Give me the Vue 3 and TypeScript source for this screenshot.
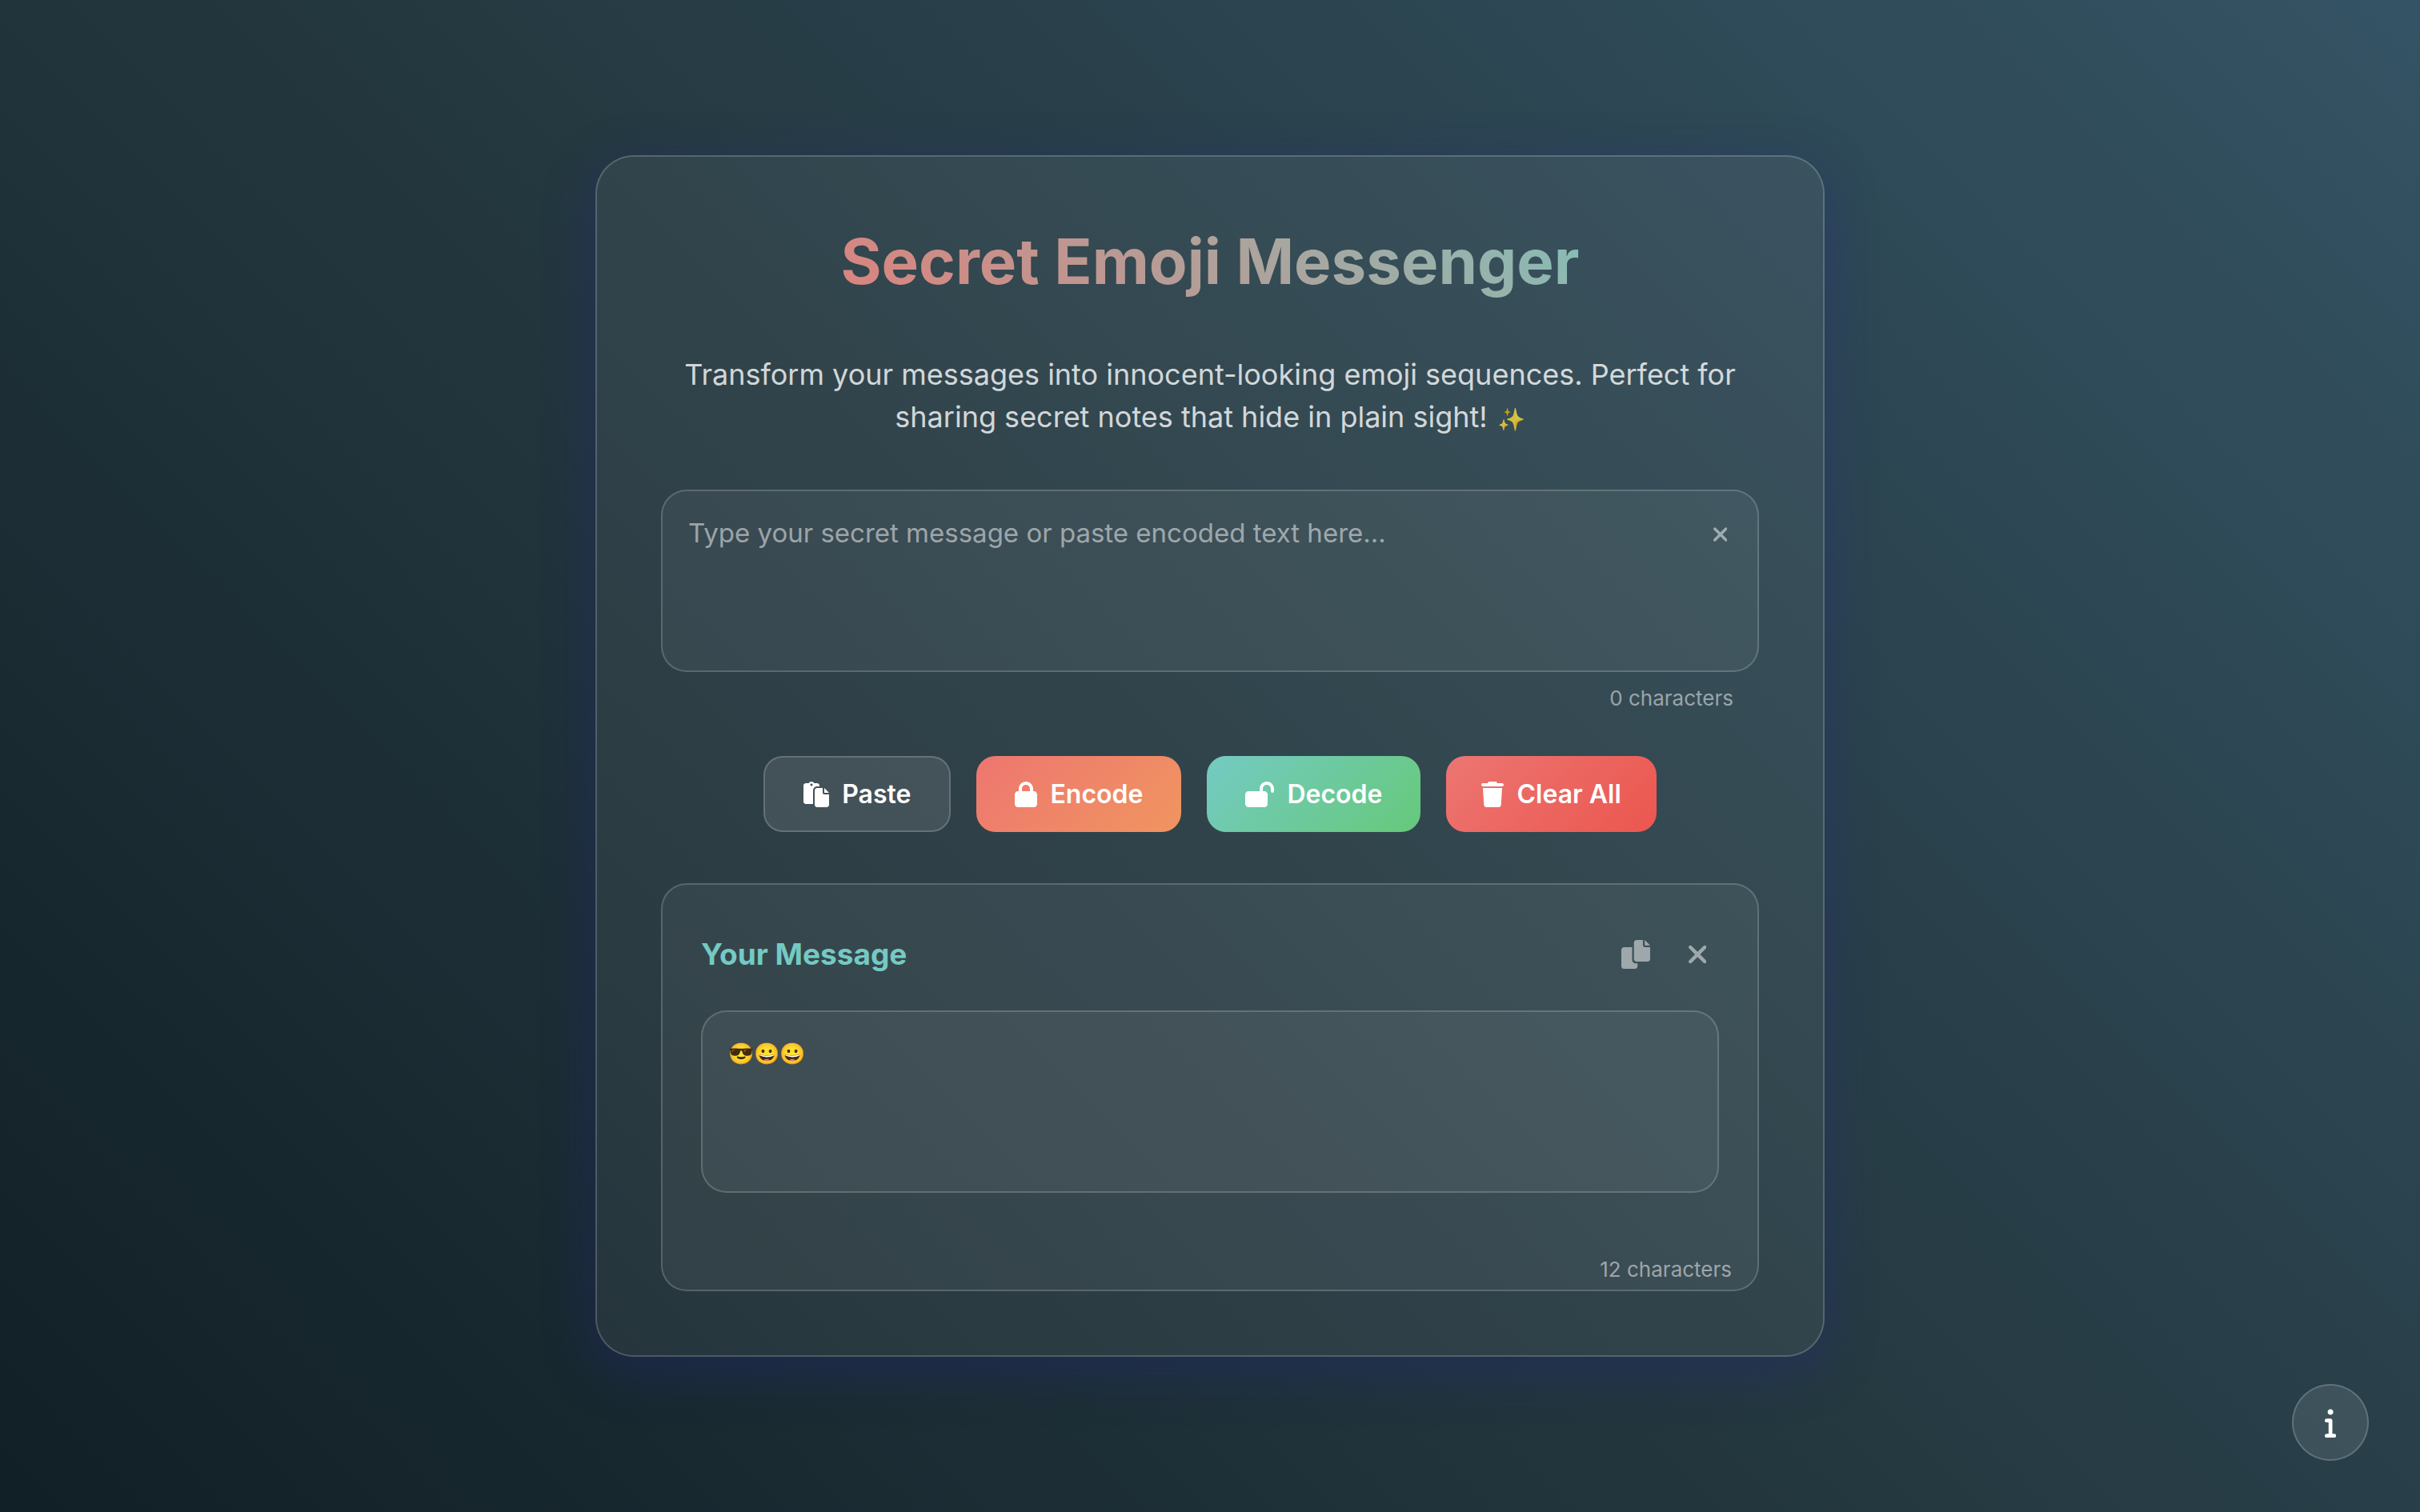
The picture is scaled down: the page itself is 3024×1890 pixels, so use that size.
<script setup lang="ts">
import { computed, ref } from 'vue'

const message = ref('')
const output = ref('😎😀😀')
const outputCount = ref(12)
const messageCount = computed(() => message.value.length)

const xmark =
  'M310.6 361.4c12.5 12.5 12.5 32.75 0 45.25C304.4 412.9 296.2 416 288 416s-16.38-3.125-22.62-9.375L160 301.3L54.63 406.6C48.38 412.9 40.19 416 32 416S15.63 412.9 9.375 406.6c-12.5-12.5-12.5-32.75 0-45.25l105.4-105.4L9.375 150.6c-12.5-12.5-12.5-32.75 0-45.25s32.75-12.5 45.25 0L160 210.8l105.4-105.4c12.5-12.5 32.75-12.5 45.25 0s12.5 32.75 0 45.25l-105.4 105.4L310.6 361.4z'

interface Action {
  label: string
  kind: string
  width: number
  path: string
}

const actions: Action[] = [
  {
    label: 'Paste',
    kind: 'paste',
    width: 512,
    path: 'M320 96V80C320 53.49 298.5 32 272 32H215.4C204.3 12.89 183.6 0 160 0S115.7 12.89 104.6 32H48C21.49 32 0 53.49 0 80v320C0 426.5 21.49 448 48 448l144 .0013L192 176C192 131.8 227.8 96 272 96H320zM160 88C146.8 88 136 77.25 136 64S146.8 40 160 40S184 50.75 184 64S173.3 88 160 88zM416 128v96h96L416 128zM384 224L384 128h-112C245.5 128 224 149.5 224 176v288c0 26.51 21.49 48 48 48h192c26.51 0 48-21.49 48-48V256h-96C398.3 256 384 241.7 384 224z',
  },
  {
    label: 'Encode',
    kind: 'encode',
    width: 448,
    path: 'M144 144v48H304V144c0-44.2-35.8-80-80-80s-80 35.8-80 80zM80 192V144C80 64.5 144.5 0 224 0s144 64.5 144 144v48h16c35.3 0 64 28.7 64 64V448c0 35.3-28.7 64-64 64H64c-35.3 0-64-28.7-64-64V256c0-35.3 28.7-64 64-64H80z',
  },
  {
    label: 'Decode',
    kind: 'decode',
    width: 576,
    path: 'M352 144c0-44.2 35.8-80 80-80s80 35.8 80 80v48c0 17.7 14.3 32 32 32s32-14.3 32-32V144C576 64.5 511.5 0 432 0S288 64.5 288 144v48H64c-35.3 0-64 28.7-64 64V448c0 35.3 28.7 64 64 64H384c35.3 0 64-28.7 64-64V256c0-35.3-28.7-64-64-64H352V144z',
  },
  {
    label: 'Clear All',
    kind: 'clear-all',
    width: 448,
    path: 'M135.2 17.7L128 32H32C14.3 32 0 46.3 0 64S14.3 96 32 96H416c17.7 0 32-14.3 32-32s-14.3-32-32-32H320l-7.2-14.3C307.4 6.8 296.3 0 284.2 0H163.8c-12.1 0-23.2 6.8-28.6 17.7zM416 128H32L53.2 467c1.6 25.3 22.6 45 47.9 45H346.9c25.3 0 46.3-19.7 47.9-45L416 128z',
  },
]
</script>

<template>
  <main class="page">
    <section class="card">
      <h1>Secret Emoji Messenger</h1>
      <p class="intro">
        Transform your messages into innocent-looking emoji sequences. Perfect for sharing secret notes that hide in
        plain sight!<span class="sparkles">✨</span>
      </p>

      <div class="field">
        <textarea
          v-model="message"
          class="box"
          aria-label="Secret message"
          placeholder="Type your secret message or paste encoded text here..."
        ></textarea>
        <button type="button" class="icon-button field-clear" aria-label="Clear message" @click="message = ''">
          <svg height="28" viewBox="0 0 320 512"><path :d="xmark" /></svg>
        </button>
      </div>
      <p class="count">{{ messageCount }} characters</p>

      <div class="actions">
        <button v-for="action in actions" :key="action.label" type="button" class="action" :class="action.kind">
          <svg height="32" :viewBox="`0 0 ${action.width} 512`"><path :d="action.path" /></svg>
          <span>{{ action.label }}</span>
        </button>
      </div>

      <section class="panel">
        <header class="panel-head">
          <h2>Your Message</h2>
          <div class="panel-tools">
            <button type="button" class="icon-button" aria-label="Copy">
              <svg height="36" viewBox="0 0 512 512">
                <path
                  d="M384 96L384 0h-112c-26.51 0-48 21.49-48 48v288c0 26.51 21.49 48 48 48H464c26.51 0 48-21.49 48-48V128h-95.1C398.4 128 384 113.6 384 96zM416 0v96h96L416 0zM192 352V128h-144c-26.51 0-48 21.49-48 48v288c0 26.51 21.49 48 48 48h192c26.51 0 48-21.49 48-48L288 416h-32C220.7 416 192 387.3 192 352z"
                />
              </svg>
            </button>
            <button type="button" class="icon-button" aria-label="Close">
              <svg height="36" viewBox="0 0 320 512"><path :d="xmark" /></svg>
            </button>
          </div>
        </header>
        <div class="panel-body">
          <textarea v-model="output" class="box emoji" aria-label="Your message" readonly></textarea>
        </div>
        <p class="count">{{ outputCount }} characters</p>
      </section>
    </section>

    <button type="button" class="info" aria-label="Information">
      <svg height="38" viewBox="0 0 192 512">
        <path
          d="M160 448h-32V224c0-17.69-14.33-32-32-32L32 192c-17.67 0-32 14.31-32 32s14.33 32 32 32h32v192H32c-17.67 0-32 14.31-32 32s14.33 32 32 32h128c17.67 0 32-14.31 32-32S177.7 448 160 448zM96 128c26.51 0 48-21.49 48-48S122.5 32 96 32S48 53.49 48 80S69.49 128 96 128z"
        />
      </svg>
    </button>
  </main>
</template>

<style>
body {
  margin: 0;
}
</style>

<style scoped>
.page {
  min-height: 100vh;
  box-sizing: border-box;
  padding: 64px;
  display: flex;
  align-items: center;
  justify-content: center;
  background: linear-gradient(45deg, #111f26, #253941, #345364);
  font-family: Inter, 'Noto Sans', sans-serif;
  color: #fff;
}

.card {
  width: 100%;
  max-width: 1536px;
  box-sizing: border-box;
  padding: 80px;
  border: 2px solid rgba(255, 255, 255, 0.18);
  border-radius: 48px;
  background: rgba(255, 255, 255, 0.06);
  box-shadow: 0 16px 64px rgba(36, 39, 131, 0.37);
}

h1,
h2,
p {
  margin: 0;
}

h1 {
  font-size: 78px;
  line-height: 102px;
  font-weight: 700;
  text-align: center;
  background: linear-gradient(45deg, #ee7670, #74cac3);
  background-clip: text;
  color: transparent;
}

.intro {
  margin: 64px 0;
  font-size: 36px;
  line-height: 53px;
  text-align: center;
  color: rgba(255, 255, 255, 0.8);
}

.sparkles {
  display: inline-block;
  margin-left: 12px;
  font-size: 28px;
  line-height: 32px;
  vertical-align: middle;
}

.field {
  position: relative;
}

.box {
  display: block;
  width: 100%;
  height: 228px;
  box-sizing: border-box;
  padding: 32px;
  border: 2px solid rgba(255, 255, 255, 0.18);
  border-radius: 32px;
  background: rgba(255, 255, 255, 0.05);
  color: #fff;
  font-family: inherit;
  font-size: 33px;
  line-height: 40px;
  resize: none;
  outline: none;
}

.box::placeholder {
  color: rgba(255, 255, 255, 0.5);
}

.emoji {
  font-size: 26px;
}

.icon-button {
  display: flex;
  padding: 16px;
  border: 0;
  background: none;
  color: rgba(255, 255, 255, 0.5);
}

svg {
  display: block;
  fill: currentColor;
}

.field-clear {
  position: absolute;
  top: 26px;
  right: 24px;
}

.count {
  margin: 16px 32px 0;
  font-size: 26px;
  line-height: 34px;
  text-align: right;
  color: rgba(255, 255, 255, 0.5);
}

.actions {
  display: flex;
  flex-wrap: wrap;
  justify-content: center;
  gap: 32px;
  margin: 55px 0 64px;
}

.action {
  display: flex;
  align-items: center;
  gap: 16px;
  height: 95px;
  padding: 0 48px;
  border: 0;
  border-radius: 24px;
  color: #fff;
  font-family: inherit;
  font-size: 32px;
  font-weight: 600;
}

.paste {
  border: 2px solid rgba(255, 255, 255, 0.18);
  background: rgba(255, 255, 255, 0.1);
}

.encode {
  background: linear-gradient(135deg, #ee7670, #f09560);
}

.decode {
  background: linear-gradient(135deg, #74cac3, #66c97a);
}

.clear-all {
  padding: 0 44px;
  background: linear-gradient(135deg, #ec7672, #ec564f);
}

.panel {
  padding: 48px 0 8px;
  border: 2px solid rgba(255, 255, 255, 0.18);
  border-radius: 32px;
  background: rgba(255, 255, 255, 0.05);
}

.panel-head {
  display: flex;
  align-items: center;
  justify-content: space-between;
  height: 77px;
  margin: 0 48px 32px;
}

h2 {
  font-size: 37px;
  line-height: 48px;
  font-weight: 700;
  color: #74cac3;
}

.panel-tools {
  display: flex;
  align-items: center;
  gap: 16px;
}

.panel-body {
  margin: 0 48px;
}

.panel .count {
  margin-top: 79px;
}

.info {
  position: fixed;
  right: 64px;
  bottom: 64px;
  display: flex;
  align-items: center;
  justify-content: center;
  width: 96px;
  height: 96px;
  padding: 0;
  border: 2px solid rgba(255, 255, 255, 0.18);
  border-radius: 50%;
  background: rgba(255, 255, 255, 0.1);
  color: #fff;
}
</style>
